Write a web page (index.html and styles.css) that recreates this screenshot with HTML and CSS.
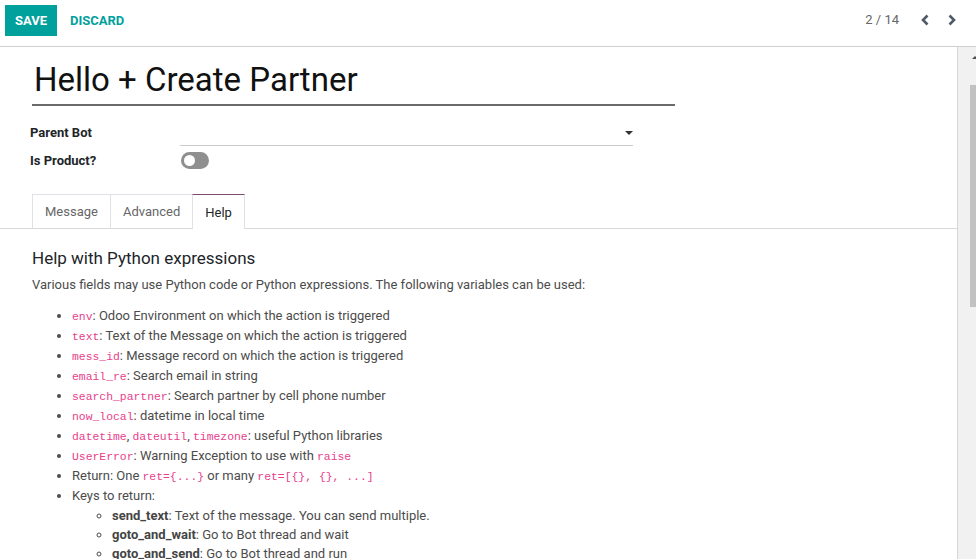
FILE: index.html
```html
<!DOCTYPE html>
<html>
<head>
<meta charset="utf-8">
<link rel="stylesheet" href="styles.css">
</head>
<body>
<div class="cp">
  <div class="cp-left">
    <button class="btn-save">SAVE</button>
    <button class="btn-discard">DISCARD</button>
  </div>
  <div class="pager">
    <span class="pager-val">2 / 14</span>
    <span class="pager-btn"><svg width="10" height="12" viewBox="0 0 10 12"><path d="M7.5 1.5 L3 6 L7.5 10.5" fill="none" stroke="currentColor" stroke-width="2.6"/></svg></span>
    <span class="pager-btn"><svg width="10" height="12" viewBox="0 0 10 12"><path d="M2.5 1.5 L7 6 L2.5 10.5" fill="none" stroke="currentColor" stroke-width="2.6"/></svg></span>
  </div>
</div>
<div class="main">
  <div class="content">
    <div class="title-wrap">
      <h1 class="title">Hello + Create Partner</h1>
    </div>
    <div class="fields">
      <div class="field-row">
        <label class="lbl">Parent Bot</label>
        <div class="m2o"><span class="caret"></span></div>
      </div>
      <div class="field-row">
        <label class="lbl">Is Product?</label>
        <div class="toggle"><span class="knob"></span></div>
      </div>
    </div>
    <div class="tabs">
      <div class="tab">Message</div>
      <div class="tab">Advanced</div>
      <div class="tab active">Help</div>
    </div>
    <div class="help">
      <h3 class="help-title">Help with Python expressions</h3>
      <p class="help-p">Various fields may use Python code or Python expressions. The following variables can be used:</p>
      <ul class="list">
        <li><code>env</code>: Odoo Environment on which the action is triggered</li>
        <li><code>text</code>: Text of the Message on which the action is triggered</li>
        <li><code>mess_id</code>: Message record on which the action is triggered</li>
        <li><code>email_re</code>: Search email in string</li>
        <li><code>search_partner</code>: Search partner by cell phone number</li>
        <li><code>now_local</code>: datetime in local time</li>
        <li><code>datetime</code>, <code>dateutil</code>, <code>timezone</code>: useful Python libraries</li>
        <li><code>UserError</code>: Warning Exception to use with <code>raise</code></li>
        <li>Return: One <code>ret={...}</code> or many <code>ret=[{}, {}, ...]</code></li>
        <li>Keys to return:
          <ul class="sublist">
            <li><b>send_text</b>: Text of the message. You can send multiple.</li>
            <li><b>goto_and_wait</b>: Go to Bot thread and wait</li>
            <li><b>goto_and_send</b>: Go to Bot thread and run</li>
          </ul>
        </li>
      </ul>
    </div>
  </div>
  <div class="scroll">
    <span class="arrow-up"></span>
    <span class="thumb"></span>
  </div>
</div>
</body>
</html>
```
FILE: styles.css
```css
html, body {
  margin: 0;
  padding: 0;
  height: 100%;
  overflow: hidden;
  background: #fff;
  font-family: Roboto, "Liberation Sans", sans-serif;
  font-size: 13px;
  color: #4c4c4c;
}
.cp {
  height: 46px;
  border-bottom: 1px solid #cfcfcf;
  display: flex;
  align-items: flex-start;
  justify-content: space-between;
  box-sizing: content-box;
}
.cp-left {
  display: flex;
  align-items: center;
  padding: 5px 0 0 5px;
}
.btn-save {
  height: 31px;
  width: 52px;
  border: none;
  background: #00a09d;
  color: #fff;
  font-family: Roboto, sans-serif;
  font-weight: 700;
  font-size: 13px;
  padding: 0;
}
.btn-discard {
  height: 31px;
  border: none;
  background: transparent;
  color: #00a09d;
  font-family: Roboto, sans-serif;
  font-weight: 700;
  font-size: 13px;
  padding: 0 0 0 13px;
}
.pager {
  display: flex;
  align-items: center;
  height: 39px;
  padding-right: 17px;
}
.pager-val {
  color: #666;
  font-size: 13px;
  margin-right: 21px;
}
.pager-btn {
  color: #4f5b69;
  display: flex;
  width: 12px;
  margin-left: 15px;
}
.pager-val + .pager-btn { margin-left: 0; }
.main {
  display: flex;
  height: 512px;
}
.content {
  flex: 1;
  overflow: hidden;
}
.title-wrap {
  padding: 11px 0 0 32px;
}
.title {
  margin: 0;
  width: 643px;
  font-size: 33px;
  font-weight: 400;
  color: #111;
  line-height: 44px;
  padding: 0 0 2px 2px;
  box-sizing: border-box;
  border-bottom: 2px solid #6b6b6b;
}
.fields {
  padding: 12px 0 0 30px;
}
.field-row {
  display: flex;
  align-items: center;
  height: 28px;
}
.lbl {
  width: 150px;
  font-weight: 700;
  color: #212529;
  font-size: 13px;
}
.m2o {
  width: 453px;
  height: 24px;
  border-bottom: 1px solid #ccc;
  position: relative;
  margin-top: 2px;
}
.caret {
  position: absolute;
  right: 0;
  top: 10px;
  width: 0;
  height: 0;
  border-left: 4px solid transparent;
  border-right: 4px solid transparent;
  border-top: 4px solid #333;
}
.toggle {
  width: 28px;
  height: 17px;
  border-radius: 9px;
  background: #8f8f8f;
  margin-left: 1px;
  position: relative;
}
.knob {
  position: absolute;
  left: 3px;
  top: 3px;
  width: 11px;
  height: 11px;
  border-radius: 50%;
  background: #fff;
}
.tabs {
  display: flex;
  margin-top: 20px;
  padding-left: 32px;
  border-bottom: 1px solid #d9d9d9;
  height: 34px;
}
.tab {
  height: 34px;
  box-sizing: border-box;
  padding: 0 12px;
  border: 1px solid #dee2e6;
  border-bottom: none;
  margin-right: -1px;
  display: flex;
  align-items: center;
  color: #666;
  font-size: 13px;
  background: #fff;
}
.tab.active {
  color: #212529;
  border-top: 1px solid #7c4f71;
  height: 35px;
}
.help {
  padding: 18px 0 0 32px;
}
.help-title {
  margin: 0;
  font-size: 17px;
  font-weight: 400;
  color: #212529;
  line-height: 22px;
}
.help-p {
  margin: 6px 0 0;
  line-height: 20px;
}
.list {
  margin: 11px 0 0;
  padding-left: 40px;
  line-height: 20px;
}
.sublist {
  margin: 0;
  padding-left: 40px;
  list-style: circle;
  line-height: 19px;
}
.sublist b { color: #444; }
code {
  font-family: "Liberation Mono", monospace;
  font-size: 11.4px;
  line-height: 0;
  color: #e83e8c;
}
.scroll {
  width: 18px;
  background: #f1f1f1;
  border-left: 1px solid #d6d6d6;
  position: relative;
}
.arrow-up {
  position: absolute;
  left: 14px;
  top: 9px;
  width: 0;
  height: 0;
  border-left: 3px solid transparent;
  border-right: 3px solid transparent;
  border-bottom: 3px solid #505050;
}
.thumb {
  position: absolute;
  left: 12px;
  top: 38px;
  width: 8px;
  height: 222px;
  background: #c1c1c1;
}
```
